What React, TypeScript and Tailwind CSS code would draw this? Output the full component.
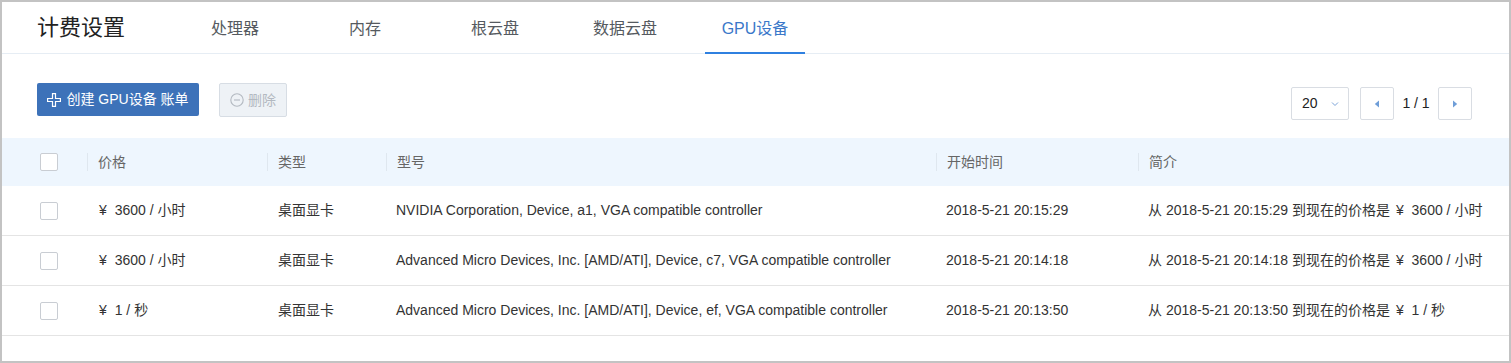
import React from "react";

const tabs = ["处理器", "内存", "根云盘", "数据云盘", "GPU设备"];

const rows = [
  {
    price: "3600 / 小时",
    type: "桌面显卡",
    model: "NVIDIA Corporation, Device, a1, VGA compatible controller",
    start: "2018-5-21 20:15:29",
  },
  {
    price: "3600 / 小时",
    type: "桌面显卡",
    model: "Advanced Micro Devices, Inc. [AMD/ATI], Device, c7, VGA compatible controller",
    start: "2018-5-21 20:14:18",
  },
  {
    price: "1 / 秒",
    type: "桌面显卡",
    model: "Advanced Micro Devices, Inc. [AMD/ATI], Device, ef, VGA compatible controller",
    start: "2018-5-21 20:13:50",
  },
];

const cols = "grid grid-cols-[85px_180px_119px_550px_202px_1fr]";

function Checkbox() {
  return <div className="w-[18px] h-[18px] border border-[#c9cdd3] rounded-[2px] bg-white" />;
}

function Price({ value }: { value: string }) {
  return (
    <span>
      <span className="pl-[2px] pr-[4px]">¥</span> {value}
    </span>
  );
}

function HeadCell({ label }: { label: string }) {
  return (
    <div className="flex items-center">
      <div className="border-l border-[#dfe7ef] h-[18px] pl-[10px] flex items-center">{label}</div>
    </div>
  );
}

export default function App() {
  return (
    <div className="w-[1511px] h-[363px] border-2 border-[#c3c3c3] bg-white font-['Liberation_Sans','Noto_Sans_CJK_SC',sans-serif] overflow-hidden">
      {/* Top bar with title and tabs */}
      <div className="h-[52px] flex items-stretch border-b border-[#e6edf4]">
        <div className="pl-[35px] w-[183px] flex items-center text-[22px] text-[#222]">计费设置</div>
        <div className="flex gap-[30px] items-stretch">
          {tabs.map((t) => {
            const active = t === "GPU设备";
            return (
              <div
                key={t}
                className={
                  active
                    ? "w-[100px] h-[52px] -mb-px flex items-center justify-center text-[16px] text-[#3a78c9] border-b-2 border-[#2f80e0] pt-[4px]"
                    : "w-[100px] h-[52px] -mb-px flex items-center justify-center text-[16px] text-[#555a60] border-b-2 border-transparent pt-[4px]"
                }
              >
                {t}
              </div>
            );
          })}
        </div>
      </div>

      {/* Toolbar */}
      <div className="h-[84px] pt-[29px] pl-[35px] pr-[37px] flex items-start justify-between">
        <div className="flex gap-[20px]">
          <button className="h-[33px] w-[162px] bg-[#3d72b9] rounded-[2px] text-white text-[14px] flex items-center justify-center gap-[5px]">
            <svg width="14" height="14" viewBox="0 0 14 14" fill="none" stroke="white" strokeWidth="1.2">
              <path d="M5.5 0.6h3v4.9h4.9v3H8.5v4.9h-3V8.5H0.6v-3h4.9z" />
            </svg>
            <span>创建 GPU设备 账单</span>
          </button>
          <button className="h-[34px] w-[68px] bg-[#eef2f6] border border-[#d7dde4] rounded-[2px] text-[#b3b9c1] text-[14px] flex items-center justify-center gap-[4px]">
            <svg width="14" height="14" viewBox="0 0 14 14" fill="none" stroke="#b3b9c1" strokeWidth="1.1">
              <circle cx="7" cy="7" r="6.2" />
              <path d="M4 7h6" />
            </svg>
            <span>删除</span>
          </button>
        </div>
        <div className="flex items-center mt-[4px] text-[14px] text-[#222]">
          <div className="h-[33px] w-[58px] border border-[#d9dde3] rounded-[2px] flex items-center pl-[10px] gap-[13px]">
            <span>20</span>
            <svg width="8" height="6" viewBox="0 0 8 6" fill="none" stroke="#7ba3d8" strokeWidth="1">
              <path d="M1 1.5l3 3 3-3" />
            </svg>
          </div>
          <div className="ml-[11px] h-[33px] w-[34px] border border-[#d9dde3] rounded-[2px] flex items-center justify-center">
            <svg width="6" height="8" viewBox="0 0 6 8" fill="#6f9ed8">
              <path d="M5 0.5v7L0.8 4z" />
            </svg>
          </div>
          <span className="w-[44px] text-center">1 / 1</span>
          <div className="h-[33px] w-[34px] border border-[#d9dde3] rounded-[2px] flex items-center justify-center">
            <svg width="6" height="8" viewBox="0 0 6 8" fill="#6f9ed8">
              <path d="M1 0.5v7L5.2 4z" />
            </svg>
          </div>
        </div>
      </div>

      {/* Table */}
      <div className={`${cols} h-[48px] bg-[#eef6fe] text-[14px] text-[#666]`}>
        <div className="flex items-center pl-[38px]">
          <Checkbox />
        </div>
        <HeadCell label="价格" />
        <HeadCell label="类型" />
        <HeadCell label="型号" />
        <HeadCell label="开始时间" />
        <HeadCell label="简介" />
      </div>
      {rows.map((r, i) => (
        <div key={i} className={`${cols} h-[50px] border-b border-[#e4e4e4] text-[14px] text-[#333]`}>
          <div className="flex items-center pl-[38px]">
            <Checkbox />
          </div>
          <div className="flex items-center pl-[10px]">
            <Price value={r.price} />
          </div>
          <div className="flex items-center pl-[11px]">{r.type}</div>
          <div className="flex items-center pl-[10px] whitespace-nowrap">{r.model}</div>
          <div className="flex items-center pl-[10px] whitespace-nowrap">{r.start}</div>
          <div className="flex items-center pl-[10px] whitespace-nowrap">
            <span>
              从 {r.start} 到现在的价格是 <Price value={r.price} />
            </span>
          </div>
        </div>
      ))}
    </div>
  );
}
